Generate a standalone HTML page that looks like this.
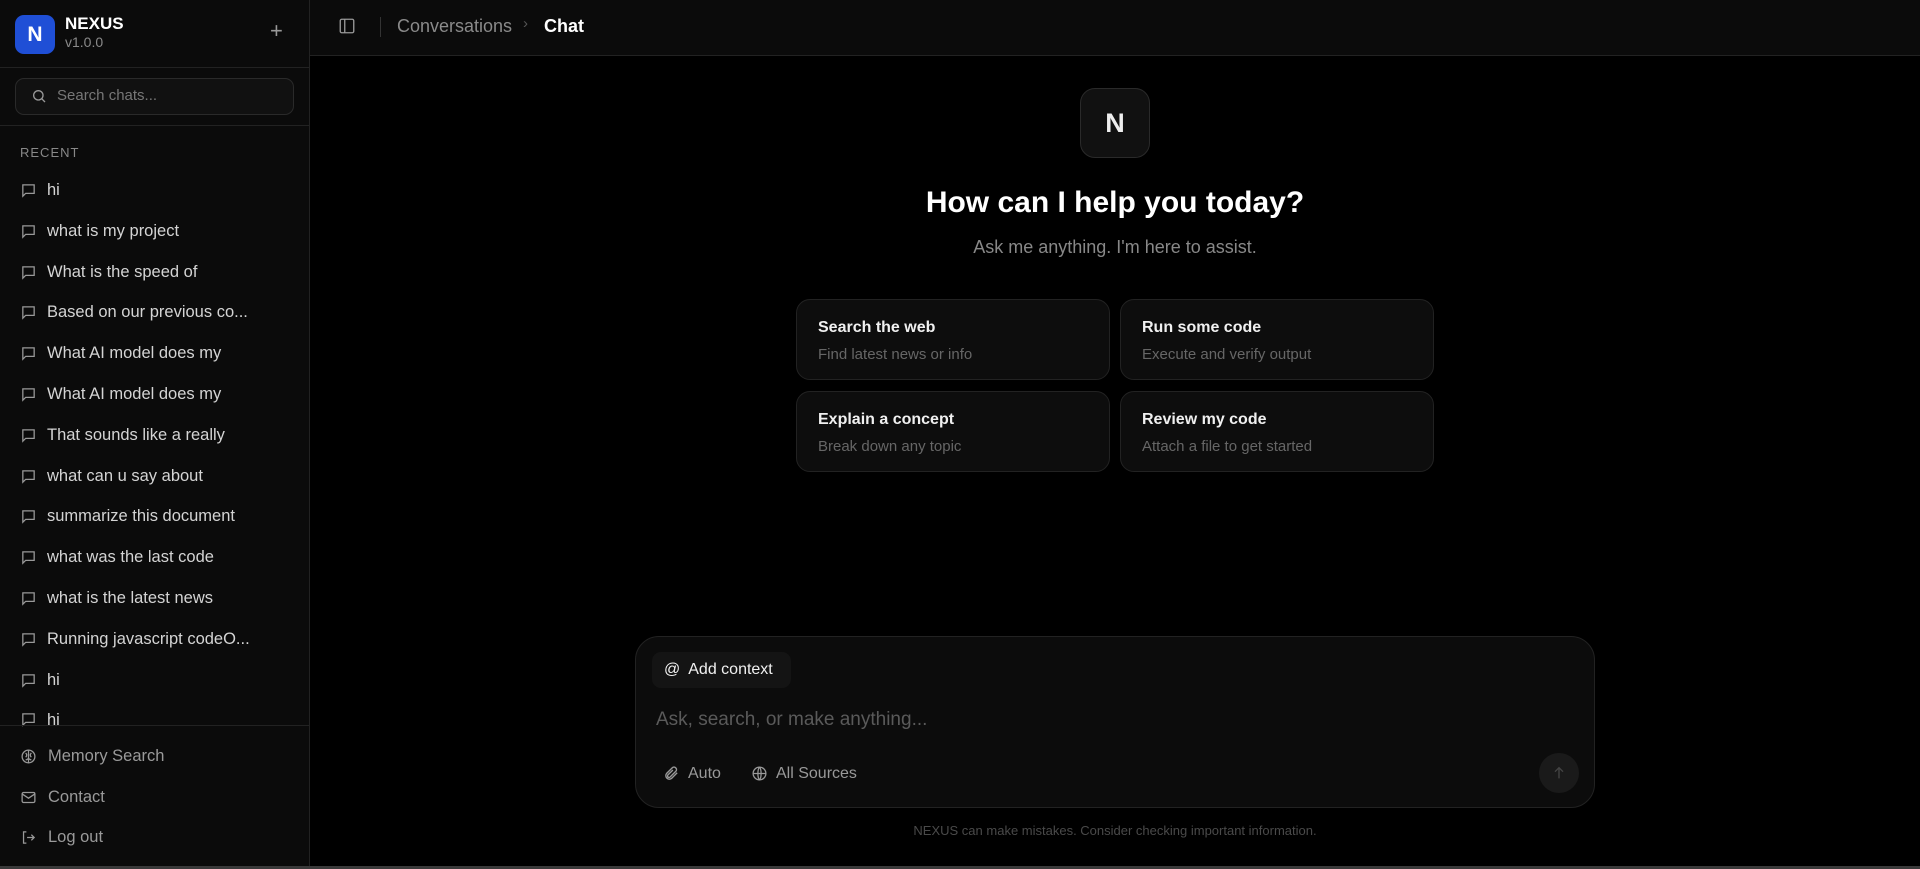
<!DOCTYPE html>
<html><head><meta charset="utf-8"><style>
*{box-sizing:border-box;margin:0;padding:0}
body{width:1920px;height:869px;background:#000;font-family:"Liberation Sans",sans-serif;position:relative;overflow:hidden;color:#ddd}
.sb{position:absolute;left:0;top:0;width:310px;height:866px;background:#0b0b0b;border-right:1px solid #222}
.abs{position:absolute}
.hline{position:absolute;left:0;width:309px;height:1px;background:#222}
.item{position:absolute;left:20px;font-size:16.5px;color:#d4d4d4;display:flex;align-items:center;gap:10px;white-space:nowrap}
.item svg{width:17px;height:17px;flex:none}
.bot{position:absolute;left:20px;font-size:16.5px;color:#9a9a9a;display:flex;align-items:center;gap:11px}
.bot svg{width:17px;height:17px}
.card{position:absolute;width:314px;height:81px;background:#0d0d0d;border:1px solid #222;border-radius:14px;padding:19px 21px}
.card b{display:block;font-size:16px;color:#f0f0f0;font-weight:bold}
.card span{display:block;font-size:15px;color:#666;margin-top:9px}
</style></head><body>
<div class="sb">
  <div class="abs" style="left:15px;top:15px;width:40px;height:39px;background:#1f4fd6;border-radius:9px;color:#fff;font-weight:bold;font-size:21px;display:flex;align-items:center;justify-content:center">N</div>
  <div class="abs" style="left:65px;top:14px;font-size:17px;font-weight:bold;color:#fff">NEXUS</div>
  <div class="abs" style="left:65px;top:34px;font-size:14px;color:#8a8a8a">v1.0.0</div>
  <div class="abs" style="left:270px;top:18px;font-size:22px;color:#999;font-weight:300">+</div>
  <div class="hline" style="top:67px"></div>
  <div class="abs" style="left:15px;top:78px;width:279px;height:37px;border:1px solid #2a2a2a;border-radius:9px;background:#111"></div>
  <svg class="abs" style="left:31px;top:88px" width="16" height="16" viewBox="0 0 24 24" fill="none" stroke="#999" stroke-width="2"><circle cx="11" cy="11" r="7"/><path d="M21 21l-5-5"/></svg>
  <div class="abs" style="left:57px;top:87px;font-size:15px;color:#777">Search chats...</div>
  <div class="hline" style="top:125px"></div>
  <div class="abs" style="left:20px;top:145px;font-size:13px;color:#888;letter-spacing:1px">RECENT</div>
  <div id="items"></div>
  <div class="hline" style="top:725px"></div>
  <div class="bot" style="top:747px"><svg viewBox="0 0 24 24" fill="none" stroke="#999" stroke-width="1.8"><circle cx="12" cy="12" r="9"/><path d="M12 3v18M8 7c2 2 2 4 0 6M16 7c-2 2-2 4 0 6M8 17l4-2 4 2"/></svg>Memory Search</div>
  <div class="bot" style="top:788px"><svg viewBox="0 0 24 24" fill="none" stroke="#999" stroke-width="1.8"><rect x="3" y="5" width="18" height="14" rx="2"/><path d="M3 7l9 6 9-6"/></svg>Contact</div>
  <div class="bot" style="top:828px"><svg viewBox="0 0 24 24" fill="none" stroke="#999" stroke-width="1.8"><path d="M9 4H5v16h4M10 12h10M16 8l4 4-4 4"/></svg>Log out</div>
</div>
<div class="abs" style="left:310px;top:0;width:1610px;height:56px;background:#0b0b0b;border-bottom:1px solid #222"></div>
<svg class="abs" style="left:338px;top:17px" width="18" height="18" viewBox="0 0 24 24" fill="none" stroke="#999" stroke-width="1.8"><rect x="3" y="3" width="18" height="18" rx="2"/><path d="M9 3v18"/></svg>
<div class="abs" style="left:380px;top:17px;width:1px;height:20px;background:#333"></div>
<div class="abs" style="left:397px;top:16px;font-size:18px;color:#8a8a8a">Conversations</div>
<div class="abs" style="left:523px;top:15px;font-size:15px;color:#555">›</div>
<div class="abs" style="left:544px;top:16px;font-size:18px;color:#fff;font-weight:bold">Chat</div>

<div class="abs" style="left:1080px;top:88px;width:70px;height:70px;border:1px solid #2a2a2a;border-radius:15px;background:#111;color:#eee;font-weight:bold;font-size:27px;display:flex;align-items:center;justify-content:center">N</div>
<div class="abs" style="left:310px;width:1610px;top:186px;text-align:center;font-size:30px;font-weight:bold;color:#fff">How can I help you today?</div>
<div class="abs" style="left:310px;width:1610px;top:237px;text-align:center;font-size:18px;color:#888">Ask me anything. I'm here to assist.</div>

<div class="card" style="left:796px;top:299px"><b>Search the web</b><span>Find latest news or info</span></div>
<div class="card" style="left:1120px;top:299px"><b>Run some code</b><span>Execute and verify output</span></div>
<div class="card" style="left:796px;top:391px"><b>Explain a concept</b><span>Break down any topic</span></div>
<div class="card" style="left:1120px;top:391px"><b>Review my code</b><span>Attach a file to get started</span></div>

<div class="abs" style="left:635px;top:636px;width:960px;height:172px;background:#0c0c0c;border:1px solid #222;border-radius:24px"></div>
<div class="abs" style="left:652px;top:652px;width:139px;height:36px;background:#141414;border-radius:9px;font-size:16px;color:#f0f0f0;padding:9px 12px">@&nbsp; Add context</div>
<div class="abs" style="left:656px;top:709px;font-size:19px;color:#5a5a5a">Ask, search, or make anything...</div>
<svg class="abs" style="left:663px;top:765px" width="17" height="17" viewBox="0 0 24 24" fill="none" stroke="#999" stroke-width="2"><path d="M20 11l-8 8a5 5 0 01-7-7l8-8a3.5 3.5 0 015 5l-8 8a2 2 0 01-3-3l7-7"/></svg>
<div class="abs" style="left:688px;top:765px;font-size:16px;color:#999">Auto</div>
<svg class="abs" style="left:751px;top:765px" width="17" height="17" viewBox="0 0 24 24" fill="none" stroke="#999" stroke-width="1.8"><circle cx="12" cy="12" r="9"/><path d="M3 12h18M12 3c3 3 3 15 0 18M12 3c-3 3-3 15 0 18"/></svg>
<div class="abs" style="left:776px;top:765px;font-size:16px;color:#999">All Sources</div>
<div class="abs" style="left:1539px;top:753px;width:40px;height:40px;border-radius:50%;background:#1a1a1a"></div>
<svg class="abs" style="left:1551px;top:765px" width="16" height="16" viewBox="0 0 24 24" fill="none" stroke="#444" stroke-width="2"><path d="M12 20V4M6 10l6-6 6 6"/></svg>
<div class="abs" style="left:310px;width:1610px;top:823px;text-align:center;font-size:13px;color:#4a4a4a">NEXUS can make mistakes. Consider checking important information.</div>
<div class="abs" style="left:0;top:866px;width:1920px;height:3px;background:#3a3a3a"></div>
<script>
var t=["hi","what is my project","What is the speed of","Based on our previous co...","What AI model does my","What AI model does my","That sounds like a really","what can u say about","summarize this document","what was the last code","what is the latest news","Running javascript codeO...","hi","hi"];
var h="";t.forEach(function(s,i){var y=181+i*40.8;h+='<div class="item" style="top:'+y+'px'+(i==13?';height:16px;overflow:hidden;align-items:flex-start':'')+'"><svg viewBox="0 0 24 24" fill="none" stroke="#999" stroke-width="1.8"><path d="M4 4h16v12H8l-4 4z"/></svg>'+s+'</div>';});
document.getElementById("items").innerHTML=h;
</script>
</body></html>
